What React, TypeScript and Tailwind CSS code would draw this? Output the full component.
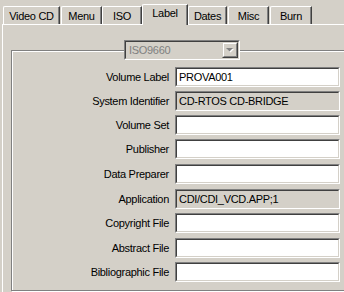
const tabs = [
  { name: 'Video CD', w: 'w-[57px]', ml: 'ml-[3px]' },
  { name: 'Menu', w: 'w-[41px]', ml: 'ml-[1px]' },
  { name: 'ISO', w: 'w-[40px]', ml: '' },
  { name: 'Label', w: 'w-[46px]', ml: '', selected: true },
  { name: 'Dates', w: 'w-[39px]', ml: '' },
  { name: 'Misc', w: 'w-[41px]', ml: 'ml-[1px]' },
  { name: 'Burn', w: 'w-[42px]', ml: 'ml-[1px]' },
];

const rows: { label: string; value?: string; readOnly?: boolean; gap: string }[] = [
  { label: 'Volume Label', value: 'PROVA001', gap: 'mt-[7px]' },
  { label: 'System Identifier', value: 'CD-RTOS CD-BRIDGE', readOnly: true, gap: 'mt-[4px]' },
  { label: 'Volume Set', gap: 'mt-[4px]' },
  { label: 'Publisher', gap: 'mt-[4px]' },
  { label: 'Data Preparer', gap: 'mt-[5px]' },
  { label: 'Application', value: 'CDI/CDI_VCD.APP;1', readOnly: true, gap: 'mt-[5px]' },
  { label: 'Copyright File', gap: 'mt-[4px]' },
  { label: 'Abstract File', gap: 'mt-[5px]' },
  { label: 'Bibliographic File', gap: 'mt-[4px]' },
];

const Sunken = ({
  className,
  inner,
  children,
}: {
  className: string;
  inner: string;
  children?: React.ReactNode;
}) => (
  <div
    className={`${className} border border-t-[#808080] border-l-[#808080] border-b-white border-r-white`}
  >
    <div
      className={`${inner} flex h-full items-center border border-t-[#404040] border-l-[#404040] border-b-[#d4d0c8] border-r-[#d4d0c8]`}
    >
      {children}
    </div>
  </div>
);

const ComboBox = () => (
  <Sunken
    className="-mt-[11px] ml-[112px] h-[20px] w-[116px]"
    inner="bg-[#d4d0c8] justify-between"
  >
    <span className="pl-[3px] text-[#808080]">ISO9660</span>
    <div className="h-[16px] w-[16px] border border-t-[#d4d0c8] border-l-[#d4d0c8] border-b-[#404040] border-r-[#404040]">
      <div className="flex h-full items-center justify-center border border-t-white border-l-white border-b-[#808080] border-r-[#808080]">
        <svg width="8" height="5" viewBox="0 0 8 5">
          <path d="M1 1h7L4.5 4.5z" fill="#ffffff" />
          <path d="M0 0h7L3.5 3.5z" fill="#808080" />
        </svg>
      </div>
    </div>
  </Sunken>
);

export default function App() {
  return (
    <div className="flex h-[292px] w-[344px] flex-col overflow-hidden bg-[#d4d0c8] font-['Liberation_Sans',Arial,sans-serif] text-[11px] leading-none tracking-[-0.3px] text-black">
      <div className="flex h-[24px] shrink-0 items-end">
        {tabs.map((tab) =>
          tab.selected ? (
            <div
              key={tab.name}
              className={`${tab.w} ${tab.ml} relative z-10 -mb-px flex h-[21px] items-center justify-center rounded-tl-[2px] border-t border-l border-r border-t-white border-l-white border-r-[#404040] bg-[#d4d0c8] pb-[3px] shadow-[inset_-1px_0_0_#808080]`}
            >
              {tab.name}
            </div>
          ) : (
            <div
              key={tab.name}
              className={`${tab.w} ${tab.ml} flex h-[18px] items-center justify-center rounded-tl-[2px] border-t border-l border-r border-t-white border-l-white border-r-[#404040] pt-[1px] shadow-[inset_-1px_0_0_#808080]`}
            >
              {tab.name}
            </div>
          )
        )}
      </div>

      <div className="ml-[2px] w-[360px] flex-1 border-t border-l border-white pl-[8px]">
        <div className="mt-[25px] flex w-[340px] flex-col border border-[#808080] pb-[8px] shadow-[inset_1px_1px_0_#ffffff,1px_1px_0_#ffffff]">
          <ComboBox />
          {rows.map((row) => (
            <div key={row.label} className={`${row.gap} flex items-center`}>
              <span className="w-[158px] pr-[1px] text-right">{row.label}</span>
              <Sunken
                className="ml-[5px] h-[20px] w-[165px]"
                inner={row.readOnly ? 'bg-[#d4d0c8] pl-[2px]' : 'bg-white pl-[2px]'}
              >
                {row.value}
              </Sunken>
            </div>
          ))}
        </div>
      </div>
    </div>
  );
}
